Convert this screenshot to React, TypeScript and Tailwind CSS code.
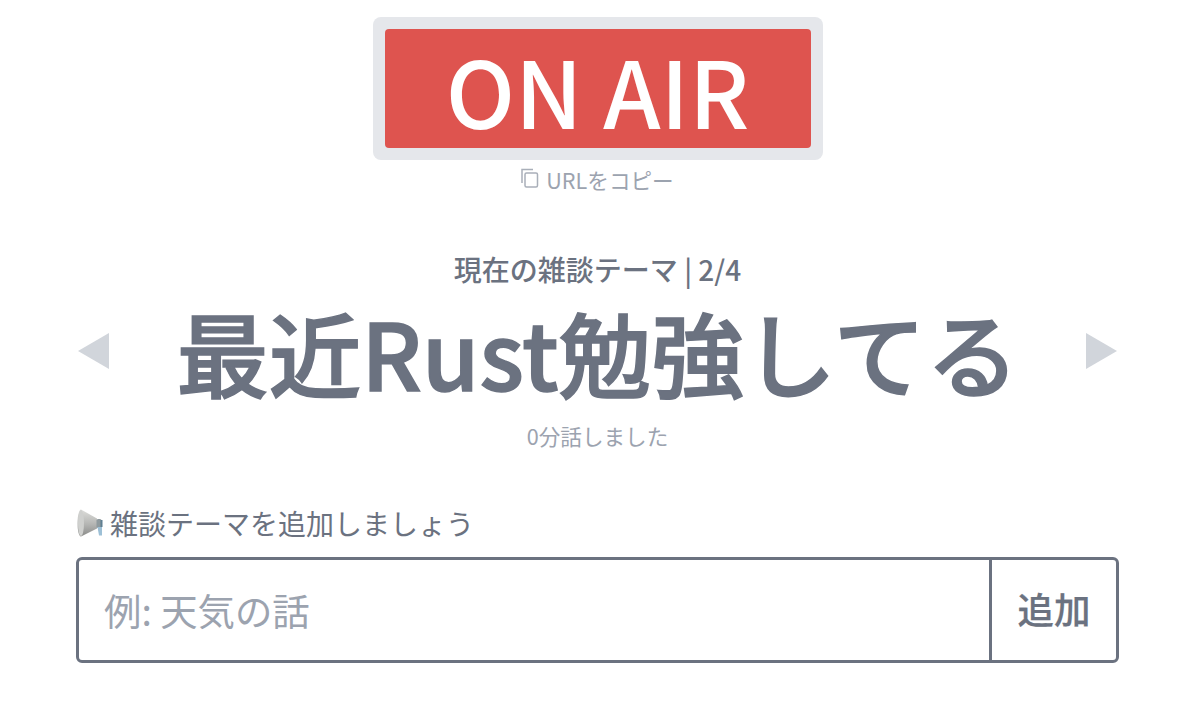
import React from 'react';

const font = { fontFamily: '"Noto Sans CJK JP", "Noto Sans", sans-serif' };

const Megaphone = () => (
  <svg width="28" height="30" viewBox="0 0 28 30" className="shrink-0">
    <defs>
      <linearGradient id="cone" x1="0" y1="0" x2="0" y2="1">
        <stop offset="0" stopColor="#dededb" />
        <stop offset="0.55" stopColor="#b4b5b3" />
        <stop offset="1" stopColor="#8a8b88" />
      </linearGradient>
    </defs>
    <path d="M5 1.5 C3 1.5 1.5 8 1.5 15 C1.5 23 3 28.5 5 28.5 L21 20.5 L21 10.5 Z" fill="url(#cone)" />
    <ellipse cx="5" cy="15" rx="3" ry="13" fill="#cfd0ce" />
    <rect x="20.5" y="11" width="5" height="9" rx="1.5" fill="#8f9a9e" />
    <path d="M21.5 19 L26 19 L26 27.5 L23 27.5 Z" fill="#9dc0d6" />
    <rect x="24.5" y="12" width="2" height="7" fill="#5f7f92" />
  </svg>
);

export default function App() {
  return (
    <div style={font} className="w-[1200px] h-[703px] bg-white overflow-hidden flex flex-col items-center pl-[76px] pr-[81px] pt-[17px]">
      <div className="w-[450px] h-[143px] bg-[#e5e7eb] rounded-lg p-3 shrink-0">
        <div className="w-full h-full bg-[#de544f] rounded-sm flex items-center justify-center text-white text-[92px] leading-none font-medium">
          ON AIR
        </div>
      </div>
      <div className="mt-2 h-6 flex items-center gap-[7px] text-[#9ca3af] text-[21.6px] leading-none">
        <svg width="18" height="20" viewBox="0 0 18 20" fill="none" stroke="#a9afb9" strokeWidth="1.5" className="-mt-1">
          <rect x="4" y="5" width="12.5" height="14" rx="1.5" />
          <path d="M1 15V1.5h11" />
        </svg>
        <span>URLをコピー</span>
      </div>

      <div className="mt-[63px] text-[#6b7280] text-[28px] leading-none font-medium">現在の雑談テーマ | 2/4</div>
      <div className="w-full h-[92px] mt-[22px] px-[2px] flex items-center justify-between">
        <div className="w-0 h-0 border-y-[18px] border-y-transparent border-r-[31px] border-r-[#d1d5db]" />
        <div className="text-[#6b7280] text-[92.6px] leading-none font-medium [-webkit-text-stroke:1.5px_#6b7280]">最近Rust勉強してる</div>
        <div className="w-0 h-0 border-y-[18px] border-y-transparent border-l-[31px] border-l-[#d1d5db]" />
      </div>
      <div className="mt-[28px] text-[#9ca3af] text-[21.6px] leading-none">0分話しました</div>

      <div className="w-full mt-[61px] text-[#6b7280] text-[28px] leading-none flex items-center gap-[6px]">
        <Megaphone />
        <span>雑談テーマを追加しましょう</span>
      </div>
      <div className="w-full h-[106px] mt-[19px] border-[3px] border-[#6b7280] rounded-md flex shrink-0">
        <div className="flex-1 flex items-center pl-[25px] text-[#9ca3af] text-[37.4px]">例: 天気の話</div>
        <div className="w-[127px] border-l-[3px] border-[#6b7280] flex items-center justify-center text-[#6b7280] text-[36.5px] font-medium [-webkit-text-stroke:0.25px_#6b7280]">追加</div>
      </div>
    </div>
  );
}
